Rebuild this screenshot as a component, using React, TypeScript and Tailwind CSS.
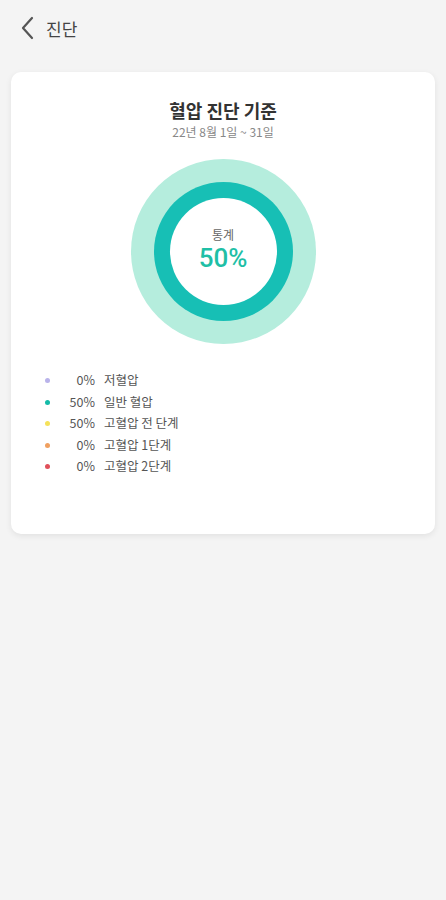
import React from "react";

type Stage = {
  color: string;
  percent: number;
  label: string;
};

const stages: Stage[] = [
  { color: "bg-[#b9b3ea]", percent: 0, label: "저혈압" },
  { color: "bg-[#14bba8]", percent: 50, label: "일반 혈압" },
  { color: "bg-[#f5e25a]", percent: 50, label: "고혈압 전 단계" },
  { color: "bg-[#f0a060]", percent: 0, label: "고혈압 1단계" },
  { color: "bg-[#e0505a]", percent: 0, label: "고혈압 2단계" },
];

export default function App() {
  return (
    <div
      className="min-h-[900px] w-full bg-[#f4f4f4] text-[#333]"
      style={{ fontFamily: '"Noto Sans CJK KR", "Noto Sans", sans-serif' }}
    >
      <header className="flex h-[56px] items-center pl-[17px]">
        <button type="button" className="flex h-[24px] w-[20px] items-center justify-center">
          <svg width="14" height="24" viewBox="0 0 14 24" fill="none">
            <path d="M12 2L3 12l9 10" stroke="#555" strokeWidth="2.2" strokeLinecap="round" strokeLinejoin="round" />
          </svg>
        </button>
        <h1 className="ml-[9px] text-[17px] font-normal leading-none text-[#444]">진단</h1>
      </header>

      <main className="px-[11px] pt-[16px]">
        <section className="h-[462px] rounded-[10px] bg-white pt-[25px] shadow-[0_2px_6px_rgba(0,0,0,0.08)]">
          <div className="flex flex-col items-center">
            <h2 className="text-[18px] font-bold leading-[26px] text-[#333]">혈압 진단 기준</h2>
            <p className="mt-[1px] text-[12px] leading-[16px] text-[#888]">22년 8월 1일 ~ 31일</p>

            <div className="mt-[19px] flex h-[185px] w-[185px] items-center justify-center rounded-full bg-[#b5eddd]">
              <div className="flex h-[139px] w-[139px] items-center justify-center rounded-full bg-[#17bfb5]">
                <div className="flex h-[107px] w-[107px] flex-col items-center justify-center rounded-full bg-white pb-[4px]">
                  <span className="text-[12px] leading-[17px] text-[#666]">통계</span>
                  <span className="font-['Roboto',sans-serif] text-[26px] font-medium leading-[31px] text-[#1fbfa6]">50%</span>
                </div>
              </div>
            </div>
          </div>

          <ul className="mt-[26px] flex flex-col pl-[34px]">
            {stages.map((s) => (
              <li key={s.label} className="flex h-[21.5px] items-center text-[12.5px] text-[#555]">
                <span className={`h-[5px] w-[5px] rounded-full ${s.color}`} />
                <span className="w-[45px] text-right">{s.percent}%</span>
                <span className="ml-[9px]">{s.label}</span>
              </li>
            ))}
          </ul>
        </section>
      </main>
    </div>
  );
}
